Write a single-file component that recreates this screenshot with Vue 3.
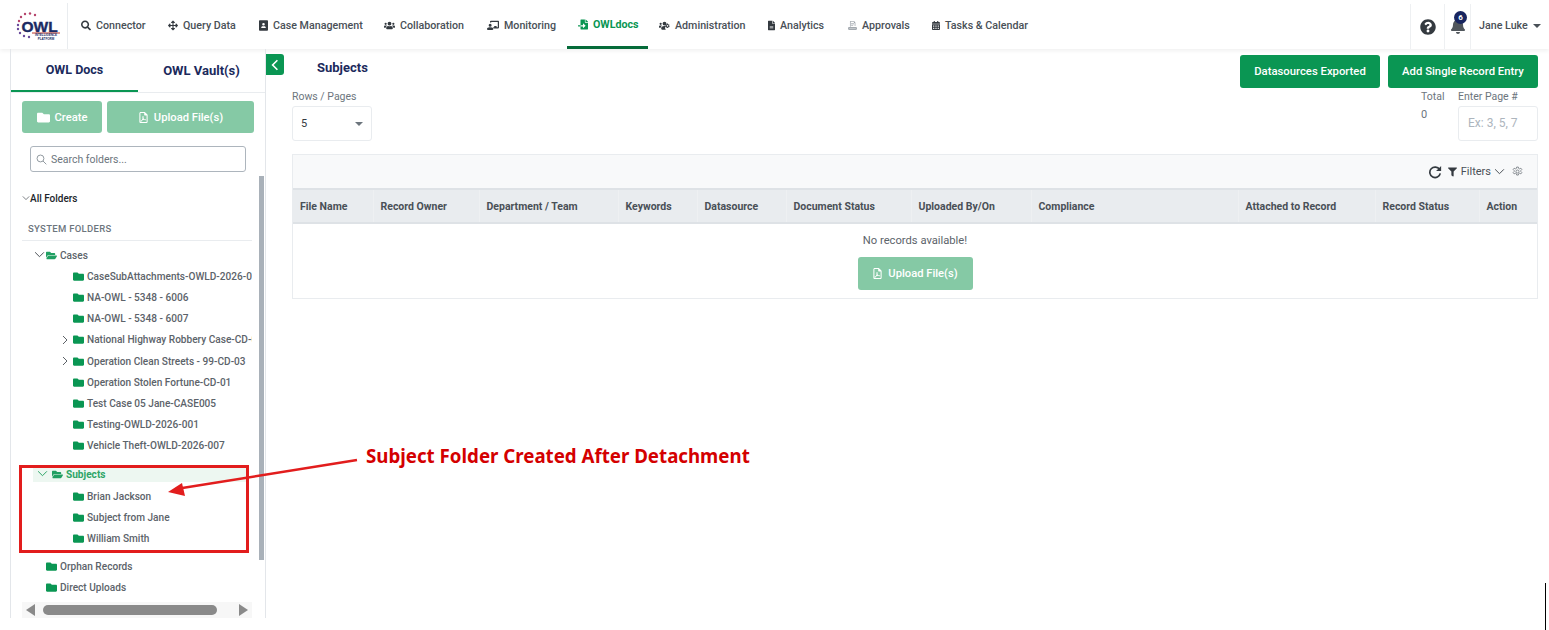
<script setup>
const icons = {
  search: ['0 0 512 512', 'M505 442.7L405.3 343c-4.5-4.5-10.6-7-17-7H372c27.6-35.3 44-79.7 44-128C416 93.1 322.9 0 208 0S0 93.1 0 208s93.1 208 208 208c48.3 0 92.7-16.4 128-44v16.3c0 6.4 2.5 12.5 7 17l99.7 99.7c9.4 9.4 24.6 9.4 33.9 0l28.3-28.3c9.4-9.4 9.4-24.6.1-34zM208 336c-70.7 0-128-57.2-128-128 0-70.7 57.2-128 128-128 70.7 0 128 57.2 128 128 0 70.7-57.2 128-128 128z'],
  move: ['0 0 512 512', 'M352.201 425.775l-79.196 79.196c-9.373 9.373-24.568 9.373-33.941 0l-79.196-79.196c-15.119-15.119-4.411-40.971 16.971-40.97h51.162L228 284H127.196v51.162c0 21.382-25.851 32.09-40.971 16.971L7.029 272.937c-9.373-9.373-9.373-24.569 0-33.941L86.225 159.8c15.119-15.119 40.971-4.411 40.971 16.971V228H228V127.196h-51.23c-21.382 0-32.09-25.851-16.971-40.971l79.196-79.196c9.373-9.373 24.568-9.373 33.941 0l79.196 79.196c15.119 15.119 4.411 40.971-16.971 40.971h-51.162V228h100.804v-51.162c0-21.382 25.851-32.09 40.97-16.971l79.196 79.196c9.373 9.373 9.373 24.569 0 33.941L425.773 352.2c-15.119 15.119-40.971 4.411-40.97-16.971V284H284v100.804h51.23c21.382 0 32.09 25.851 16.971 40.971z'],
  book: ['0 0 448 512', 'M48 0h352c26 0 48 22 48 48v416c0 26-22 48-48 48H48c-26 0-48-22-48-48V48C0 22 22 0 48 0zm176 128a64 64 0 1 0 0 128 64 64 0 0 0 0-128zM112 352v32h224v-32c0-35-29-64-64-64h-96c-35 0-64 29-64 64z'],
  users: ['0 0 640 512', 'M96 224a64 64 0 1 0 0-128 64 64 0 0 0 0 128zm448 0a64 64 0 1 0 0-128 64 64 0 0 0 0 128zm32 32h-64c-18 0-33 7-45 19 40 22 69 62 75 109h66c18 0 32-14 32-32v-32c0-35-29-64-64-64zm-256 0a112 112 0 1 0 0-224 112 112 0 0 0 0 224zm77 32h-8c-21 10-44 16-69 16s-48-6-69-16h-8c-64 0-115 52-115 115v29c0 26 22 48 48 48h288c26 0 48-22 48-48v-29c0-63-51-115-115-115zM173 275c-12-12-27-19-45-19H64c-35 0-64 29-64 64v32c0 18 14 32 32 32h66c6-47 35-87 75-109z'],
  monitor: ['0 0 640 512', 'M208 352c-3 0-6 0-9 1-10 3-21 5-31 5s-21-2-31-5c-3-1-6-1-9-1-62 0-128 39-128 96 0 27 22 48 48 48h240c26 0 48-21 48-48 0-57-66-96-128-96zm-40-32a80 80 0 1 0 0-160 80 80 0 0 0 0 160zM592 0H208c-26 0-48 22-48 49v47c23 0 45 7 64 18V64h352v288h-64v-64H384v64h-76c19 17 33 39 38 64h246c26 0 48-22 48-49V49c0-27-22-49-48-49z'],
  fileIn: ['0 0 512 512', 'M16 288c-9 0-16 7-16 16v32c0 9 7 16 16 16h112v-64zm489-183L407 7c-5-5-11-7-17-7h-6v128h128v-6c0-6-2-12-7-17zm-153 31V0H152c-13 0-24 11-24 24v264h128v-65c0-14 17-21 27-11l96 97c6 6 6 16 0 22l-96 97c-10 10-27 3-27-11v-65H128v136c0 13 11 24 24 24h336c13 0 24-11 24-24V160H376c-13 0-24-11-24-24z'],
  cogs: ['0 0 640 512', 'M610 305l-23-13c2-12 2-24 0-36l23-13c3-2 4-5 3-8-6-19-16-36-29-50-2-2-5-3-8-1l-23 13c-9-8-20-14-31-18v-27c0-3-2-6-5-6-19-4-39-4-58 0-3 0-5 3-5 6v27c-11 4-22 10-31 18l-23-13c-3-2-6-1-8 1-13 14-23 31-29 50-1 3 0 6 3 8l23 13c-2 12-2 24 0 36l-23 13c-3 2-4 5-3 8 6 19 16 36 29 50 2 2 5 3 8 1l23-13c9 8 20 14 31 18v27c0 3 2 6 5 6 19 4 39 4 58 0 3 0 5-3 5-6v-27c11-4 22-10 31-18l23 13c3 2 6 1 8-1 13-14 23-31 29-50 1-3 0-6-3-8zM496 322a48 48 0 1 1 0-96 48 48 0 0 1 0 96zM96 224a64 64 0 1 0 0-128 64 64 0 0 0 0 128zm224 32a112 112 0 1 0 0-224 112 112 0 0 0 0 224zm-147 19c-12-12-27-19-45-19H64c-35 0-64 29-64 64v32c0 18 14 32 32 32h66c6-47 35-87 75-109zm147 13c-25 0-48 6-69 16h-8c-64 0-115 52-115 115v29c0 26 22 48 48 48h224c-32-26-48-88-48-130 0-28 4-55 10-78z'],
  file: ['0 0 384 512', 'M224 136V0H24C11 0 0 11 0 24v464c0 13 11 24 24 24h336c13 0 24-11 24-24V160H248c-13 0-24-11-24-24zm160-14v6H256V0h6c6 0 12 3 17 7l98 98c4 5 7 11 7 17zM96 300h192v30H96zm0 70h192v30H96z'],
  calendar: ['0 0 448 512', 'M0 464c0 26.5 21.5 48 48 48h352c26.5 0 48-21.5 48-48V192H0v272zm320-196c0-6.6 5.4-12 12-12h40c6.6 0 12 5.4 12 12v40c0 6.6-5.4 12-12 12h-40c-6.6 0-12-5.4-12-12v-40zm0 128c0-6.6 5.4-12 12-12h40c6.6 0 12 5.4 12 12v40c0 6.6-5.4 12-12 12h-40c-6.6 0-12-5.4-12-12v-40zM192 268c0-6.6 5.4-12 12-12h40c6.6 0 12 5.4 12 12v40c0 6.6-5.4 12-12 12h-40c-6.6 0-12-5.4-12-12v-40zm0 128c0-6.6 5.4-12 12-12h40c6.6 0 12 5.4 12 12v40c0 6.6-5.4 12-12 12h-40c-6.6 0-12-5.4-12-12v-40zM64 268c0-6.6 5.4-12 12-12h40c6.6 0 12 5.4 12 12v40c0 6.6-5.4 12-12 12H76c-6.6 0-12-5.4-12-12v-40zm0 128c0-6.6 5.4-12 12-12h40c6.6 0 12 5.4 12 12v40c0 6.6-5.4 12-12 12H76c-6.6 0-12-5.4-12-12v-40zM400 64h-48V16c0-8.8-7.2-16-16-16h-32c-8.8 0-16 7.2-16 16v48H160V16c0-8.8-7.2-16-16-16h-32c-8.8 0-16 7.2-16 16v48H48C21.5 64 0 85.5 0 112v48h448v-48c0-26.5-21.5-48-48-48z'],
  approvals: ['0 0 512 512', 'M112 16h240l64 64v200h-32V96h-48V48H144v272h-32zM176 120h170v26H176zm0 60h170v26H176zm0 60h120v26H176zM40 352h432c14 0 24 10 24 24v96c0 14-10 24-24 24H40c-14 0-24-10-24-24v-96c0-14 10-24 24-24zm24 50v26h384v-26z'],
  folder: ['0 0 512 512', 'M464 128H272l-64-64H48C21.49 64 0 85.49 0 112v288c0 26.51 21.49 48 48 48h416c26.51 0 48-21.49 48-48V176c0-26.51-21.49-48-48-48z'],
  folderOpen: ['0 0 576 512', 'M572.694 292.093L500.27 416.248A63.997 63.997 0 0 1 444.989 448H45.025c-18.523 0-30.064-20.093-20.731-36.093l72.424-124.155A64 64 0 0 1 152 256h399.964c18.523 0 30.064 20.093 20.73 36.093zM152 224h328v-48c0-26.51-21.49-48-48-48H272l-64-64H48C21.49 64 0 85.49 0 112v278.046l69.077-118.418C86.214 242.25 117.989 224 152 224z'],
  pdf: ['0 0 384 512', 'M320 464c9 0 16-7 16-16V160h-80c-18 0-32-14-32-32V48H64c-9 0-16 7-16 16v384c0 9 7 16 16 16zM0 64C0 29 29 0 64 0h165c17 0 33 7 45 19l91 91c12 12 19 28 19 45v293c0 35-29 64-64 64H64c-35 0-64-29-64-64zm180 130c14 0 24 12 22 26-3 22-9 44-17 64 12 20 27 38 44 54 24-4 66-6 76 14 9 20-10 40-32 36-20-3-38-14-54-26-28 6-55 15-81 27-14 28-32 60-58 60-20 0-32-22-22-38 12-20 36-34 58-44 14-26 26-54 36-82-8-20-14-42-16-64 0-14 10-27 24-27z'],
  question: ['0 0 512 512', 'M504 256c0 136.997-111.043 248-248 248S8 392.997 8 256C8 119.083 119.043 8 256 8s248 111.083 248 248zM262.655 90c-54.497 0-89.255 22.957-116.549 63.758-3.536 5.286-2.353 12.415 2.715 16.258l34.699 26.31c5.205 3.947 12.621 3.008 16.665-2.122 17.864-22.658 30.113-35.797 57.303-35.797 20.429 0 45.698 13.148 45.698 32.958 0 14.976-12.363 22.667-32.534 33.976C247.128 238.528 216 254.941 216 296v4c0 6.627 5.373 12 12 12h56c6.627 0 12-5.373 12-12v-1.333c0-28.462 83.186-29.647 83.186-106.667 0-58.002-60.165-102-116.531-102zM256 338c-25.365 0-46 20.635-46 46 0 25.364 20.635 46 46 46s46-20.636 46-46c0-25.365-20.635-46-46-46z'],
  bell: ['0 0 448 512', 'M224 512c35.32 0 63.97-28.65 63.97-64H160.03c0 35.35 28.65 64 63.97 64zm215.39-149.71c-19.32-20.76-55.47-51.99-55.47-154.29 0-77.7-54.48-139.9-127.94-155.16V32c0-17.67-14.32-32-31.98-32s-31.98 14.33-31.98 32v20.84C118.56 68.1 64.08 130.3 64.08 208c0 102.3-36.15 133.53-55.47 154.29-6 6.45-8.66 14.16-8.61 21.71.11 16.4 12.98 32 32.1 32h383.8c19.12 0 32-15.6 32.1-32 .05-7.55-2.61-15.27-8.61-21.71z'],
  filter: ['0 0 512 512', 'M487.976 0H24.028C2.71 0-8.047 25.866 7.058 40.971L192 225.941V432c0 7.831 3.821 15.341 10.237 19.059l80 56C298.02 518.19 320 507.491 320 488V225.941l184.947-184.97C520.021 25.896 509.338 0 487.976 0z'],
}

const nav = [
  { label: 'Connector', icon: 'search', width: 87 },
  { label: 'Query Data', icon: 'move', width: 91 },
  { label: 'Case Management', icon: 'book', width: 125 },
  { label: 'Collaboration', icon: 'users', width: 103 },
  { label: 'Monitoring', icon: 'monitor', width: 91 },
  { label: 'OWLdocs', icon: 'fileIn', width: 81, active: true },
  { label: 'Administration', icon: 'cogs', width: 109 },
  { label: 'Analytics', icon: 'file', width: 80 },
  { label: 'Approvals', icon: 'approvals', width: 84 },
  { label: 'Tasks & Calendar', icon: 'calendar', width: 120 },
]

const caseFolders = [
  { name: 'CaseSubAttachments-OWLD-2026-007' },
  { name: 'NA-OWL - 5348 - 6006' },
  { name: 'NA-OWL - 5348 - 6007' },
  { name: 'National Highway Robbery Case-CD-004', more: true },
  { name: 'Operation Clean Streets - 99-CD-03', more: true },
  { name: 'Operation Stolen Fortune-CD-01' },
  { name: 'Test Case 05 Jane-CASE005' },
  { name: 'Testing-OWLD-2026-001' },
  { name: 'Vehicle Theft-OWLD-2026-007' },
]
const subjectFolders = ['Brian Jackson', 'Subject from Jane', 'William Smith']

const columns = [
  { label: 'File Name', width: 80 },
  { label: 'Record Owner', width: 106 },
  { label: 'Department / Team', width: 139 },
  { label: 'Keywords', width: 79 },
  { label: 'Datasource', width: 89 },
  { label: 'Document Status', width: 125 },
  { label: 'Uploaded By/On', width: 120 },
  { label: 'Compliance', width: 207 },
  { label: 'Attached to Record', width: 137 },
  { label: 'Record Status', width: 104 },
  { label: 'Action', width: 58 },
]
</script>

<template>
  <div class="page">
    <header class="topbar">
      <div class="logo">
        <svg width="46" height="28" viewBox="0 0 46 28">
          <g fill="#b5436b">
            <circle cx="5" cy="5" r="1.200" /><circle cx="9" cy="2" r="1.200" /><circle cx="14" cy="1.500" r="1.200" />
            <circle cx="19" cy="3" r="1.200" /><circle cx="3" cy="9" r="1.200" />
          </g>
          <g fill="#6a4a9c">
            <circle cx="2" cy="13" r="1.200" /><circle cx="2" cy="17" r="1.200" /><circle cx="4" cy="21" r="1.200" />
            <circle cx="8" cy="24" r="1.200" /><circle cx="13" cy="25" r="1.200" />
          </g>
          <text x="5.500" y="20" class="logo-word">OWL</text>
          <rect x="16" y="20.500" width="28" height="1" fill="#c0392b" />
          <text x="30" y="24.300" class="logo-sub">INTELLIGENCE</text>
          <text x="30" y="27.500" class="logo-sub">PLATFORM</text>
        </svg>
      </div>
      <nav class="nav">
        <a
          v-for="item in nav"
          :key="item.label"
          class="nav-item"
          :class="{ active: item.active }"
          :style="{ width: item.width + 'px' }"
        >
          <svg class="nav-icon" :class="'ico-' + item.icon" :viewBox="icons[item.icon][0]"><path :d="icons[item.icon][1]" /></svg>
          {{ item.label }}
        </a>
      </nav>
      <div class="top-right">
        <div class="top-cell help">
          <svg class="help-icon" :viewBox="icons.question[0]"><path :d="icons.question[1]" /></svg>
        </div>
        <div class="top-cell bell">
          <svg class="bell-icon" :viewBox="icons.bell[0]"><path :d="icons.bell[1]" /></svg>
          <span class="badge">6</span>
        </div>
        <div class="user">Jane Luke <i class="caret"></i></div>
      </div>
    </header>

    <div class="body">
      <aside class="sidebar">
        <div class="tabs">
          <div class="tab active">OWL Docs</div>
          <div class="tab vault">OWL Vault(s)</div>
        </div>
        <div class="side-actions">
          <button class="btn-soft create">
            <svg class="btn-icon" :viewBox="icons.folder[0]"><path :d="icons.folder[1]" /></svg>
            Create
          </button>
          <button class="btn-soft upload">
            <svg class="btn-icon" :viewBox="icons.pdf[0]"><path :d="icons.pdf[1]" /></svg>
            Upload File(s)
          </button>
        </div>
        <div class="search">
          <svg class="search-icon" viewBox="0 0 16 16" fill="none" stroke="#7c858d" stroke-width="1.200">
            <circle cx="6.500" cy="6.500" r="5" /><path d="M10.200 10.200L15 15" />
          </svg>
          <span>Search folders...</span>
        </div>
        <div class="all-folders">
          <svg class="chev" viewBox="0 0 10 10"><path d="M1 3l4 4 4-4" /></svg>
          All Folders
        </div>
        <div class="tree">
          <div class="section-label">SYSTEM FOLDERS</div>
          <div class="row level-1 first">
            <svg class="chev tree-chev" viewBox="0 0 10 10"><path d="M1 3l4 4 4-4" /></svg>
            <svg class="folder open" :viewBox="icons.folderOpen[0]"><path :d="icons.folderOpen[1]" /></svg>
            <span>Cases</span>
          </div>
          <div v-for="f in caseFolders" :key="f.name" class="row level-2">
            <svg v-if="f.more" class="chev more" viewBox="0 0 10 10"><path d="M3 1l4 4-4 4" /></svg>
            <svg class="folder" :viewBox="icons.folder[0]"><path :d="icons.folder[1]" /></svg>
            <span>{{ f.name }}</span>
          </div>
          <div class="row subjects">
            <svg class="chev tree-chev" viewBox="0 0 10 10"><path d="M1 3l4 4 4-4" /></svg>
            <svg class="folder open" :viewBox="icons.folderOpen[0]"><path :d="icons.folderOpen[1]" /></svg>
            <span>Subjects</span>
          </div>
          <div v-for="name in subjectFolders" :key="name" class="row level-2">
            <svg class="folder" :viewBox="icons.folder[0]"><path :d="icons.folder[1]" /></svg>
            <span>{{ name }}</span>
          </div>
          <div class="row level-1 orphan">
            <svg class="folder" :viewBox="icons.folder[0]"><path :d="icons.folder[1]" /></svg>
            <span>Orphan Records</span>
          </div>
          <div class="row level-1">
            <svg class="folder" :viewBox="icons.folder[0]"><path :d="icons.folder[1]" /></svg>
            <span>Direct Uploads</span>
          </div>
        </div>
        <div class="hscroll">
          <i class="arrow-left"></i>
          <div class="hscroll-track"><div class="hscroll-thumb"></div></div>
          <i class="arrow-right"></i>
        </div>
        <div class="vscroll"></div>
      </aside>

      <main class="main">
        <button class="collapse">
          <svg viewBox="0 0 10 14" width="8" height="12" fill="none" stroke="#fff" stroke-width="2"><path d="M8 1L2 7l6 6" /></svg>
        </button>
        <div class="title-row">
          <h1 class="title">Subjects</h1>
          <div class="title-actions">
            <button class="btn-solid exported">Datasources Exported</button>
            <button class="btn-solid single">Add Single Record Entry</button>
          </div>
        </div>
        <div class="controls">
          <div class="field">
            <label>Rows / Pages</label>
            <div class="select">5 <i class="select-caret"></i></div>
          </div>
          <div class="total">
            <label>Total</label>
            <span>0</span>
          </div>
          <div class="field">
            <label>Enter Page #</label>
            <div class="page-input">Ex: 3, 5, 7</div>
          </div>
        </div>
        <section class="table-card">
          <div class="toolbar">
            <svg class="refresh" viewBox="0 0 16 16" fill="none" stroke="#343a40" stroke-width="1.900">
              <path d="M13.200 5.200A6 6 0 1 0 14 9.500" /><path d="M15 1v5.800H9.200" fill="#343a40" stroke="none" />
            </svg>
            <svg class="filter" :viewBox="icons.filter[0]"><path :d="icons.filter[1]" /></svg>
            <span class="filters">Filters</span>
            <svg class="chev filters-chev" viewBox="0 0 10 10"><path d="M1 3l4 4 4-4" /></svg>
            <svg class="gear" viewBox="0 0 16 16" fill="none" stroke="#5c636a" stroke-width="1">
              <path d="M6.800 1.500h2.400l.4 2 1.500.7 1.800-1 1.400 1.900-1.400 1.400v1.600l1.400 1.400-1.400 2-1.800-1-1.500.7-.4 2H6.800l-.4-2-1.500-.7-1.800 1-1.400-2 1.400-1.400V6.500L1.700 5.100l1.400-1.900 1.800 1 1.500-.7z" />
              <circle cx="8" cy="8" r="2.200" />
            </svg>
          </div>
          <table class="grid">
            <colgroup>
              <col v-for="c in columns" :key="c.label" :style="{ width: c.width + 'px' }" />
            </colgroup>
            <thead>
              <tr><th v-for="c in columns" :key="c.label">{{ c.label }}</th></tr>
            </thead>
          </table>
          <div class="empty">
            <p>No records available!</p>
            <button class="btn-soft table-upload">
              <svg class="btn-icon" :viewBox="icons.pdf[0]"><path :d="icons.pdf[1]" /></svg>
              Upload File(s)
            </button>
          </div>
        </section>
      </main>
    </div>

    <!-- callout drawn over the screenshot -->
    <div class="callout-box"></div>
    <svg class="callout-arrow" width="200" height="44" viewBox="0 0 200 44">
      <path d="M197 2L16 31" stroke="#e21d1d" stroke-width="2.500" fill="none" />
      <path d="M8 34l14-9 3 13z" fill="#e21d1d" />
    </svg>
    <div class="callout-text">Subject Folder Created After Detachment</div>
    <div class="edge-line"></div>
  </div>
</template>

<style>
html, body { margin: 0; background: #fff; overflow: hidden; }
</style>

<style scoped>
.page {
  position: relative;
  width: 1549px;
  height: 630px;
  overflow: hidden;
  background: #fff;
  font-family: Roboto, "Noto Sans", sans-serif;
  color: #343a40;
}
.topbar {
  display: flex;
  align-items: stretch;
  height: 49px;
  box-shadow: 0 2px 4px rgba(0, 0, 0, 0.06);
}
.logo {
  display: flex;
  align-items: center;
  justify-content: center;
  width: 68px;
  box-sizing: border-box;
  margin-top: 3px;
  padding-left: 10px;
  border-right: 1px solid #e9ecef;
}
.logo-word { font: 800 15.500px "Liberation Sans", sans-serif; fill: #1b2a63; stroke: #1b2a63; stroke-width: 0.400; }
.logo-sub { font: 700 3px "Liberation Sans", sans-serif; fill: #1b2a63; text-anchor: middle; }
.nav { display: flex; flex: 1; padding-left: 1.500px; }
.nav-item {
  display: flex;
  align-items: center;
  gap: 5px;
  flex: none;
  box-sizing: border-box;
  padding: 2px 0 0 11.500px;
  font-size: 10.700px;
  font-weight: 500;
  color: #495057;
  white-space: nowrap;
}
.nav-item.active {
  color: #0a9653;
  font-weight: 700;
  border-bottom: 3px solid #056b3a;
}
.nav-icon { width: 10px; height: 11px; fill: #343a40; flex: none; }
.ico-book { width: 9px; }
.ico-users, .ico-cogs { width: 11px; }
.ico-monitor { width: 12px; }
.ico-approvals { width: 9px; fill: #868e96; }
.ico-file { width: 7px; }
.ico-calendar { width: 8px; }
.nav-item.active .nav-icon { fill: #0a9653; }
.top-right { display: flex; }
.top-cell {
  position: relative;
  display: flex;
  align-items: center;
  justify-content: center;
  box-sizing: border-box;
  margin-top: 4px;
  border-left: 1px solid #eef0f2;
}
.help { width: 34px; }
.help-icon { width: 16px; height: 16px; fill: #343a40; }
.bell { width: 27px; border-right: 1px solid #eef0f2; }
.bell-icon { width: 14px; height: 18px; fill: #50565c; margin-top: -1px; }
.badge {
  position: absolute;
  top: 7px;
  left: 9px;
  width: 13px;
  height: 13px;
  border-radius: 50%;
  background: #18255f;
  color: #fff;
  font-size: 8px;
  font-weight: 700;
  line-height: 13px;
  text-align: center;
}
.user {
  display: flex;
  align-items: center;
  gap: 5px;
  box-sizing: border-box;
  width: 78px;
  padding: 2px 0 0 8px;
  font-size: 10.700px;
  font-weight: 500;
  color: #495057;
  white-space: nowrap;
}
.caret {
  border: 4px solid transparent;
  border-top-color: #495057;
  border-bottom: 0;
}
.body { display: flex; height: 569px; }
.sidebar {
  position: relative;
  flex: none;
  box-sizing: border-box;
  width: 256px;
  margin-left: 10px;
  border-left: 1px solid #e3e6ea;
  border-right: 1px solid #e3e6ea;
}
.tabs { display: flex; height: 43px; border-bottom: 1px solid #e9ecef; }
.tab {
  display: flex;
  align-items: center;
  justify-content: center;
  width: 127px;
  box-sizing: border-box;
  font-size: 12.500px;
  font-weight: 700;
  color: #1b2a5c;
}
.tab.active { border-bottom: 2px solid #0a9653; height: 43px; }
.tab.vault { font-size: 13px; }
.side-actions { display: flex; gap: 5px; padding: 8px 0 0 11px; }
.btn-soft {
  display: flex;
  align-items: center;
  justify-content: center;
  gap: 5px;
  height: 33px;
  padding: 0;
  border: 0;
  border-radius: 3px;
  background: #85c9a5;
  color: #fff;
  font: 500 11.200px Roboto, sans-serif;
}
.create { width: 80px; height: 32px; }
.upload { width: 147px; height: 32px; }
.btn-icon { height: 11px; width: 11px; fill: #fff; }
.create .btn-icon { width: 13px; height: 13px; }
.search {
  display: flex;
  align-items: center;
  gap: 4px;
  box-sizing: border-box;
  width: 216px;
  height: 26px;
  margin: 13px 0 0 19px;
  padding-left: 5px;
  border: 1px solid #adb5bd;
  border-radius: 3px;
  font-size: 10.500px;
  color: #6c757d;
}
.search-icon { width: 11px; height: 11px; }
.all-folders {
  display: flex;
  align-items: center;
  height: 16px;
  margin: 18px 0 0 11px;
  font-size: 10px;
  font-weight: 500;
  color: #212529;
}
.chev { width: 8px; height: 8px; fill: none; stroke: #4a5056; stroke-width: 0.900; flex: none; }
.tree {
  width: 230px;
  margin: 14px 0 0 11px;
  overflow: hidden;
}
.section-label {
  height: 20px;
  padding-left: 6px;
  border-bottom: 1px solid #e9ecef;
  font-size: 9.500px;
  line-height: 18px;
  font-weight: 500;
  letter-spacing: 0.300px;
  color: #6c757d;
}
.row {
  position: relative;
  display: flex;
  align-items: center;
  gap: 3px;
  height: 21.100px;
  font-size: 10.100px;
  font-weight: 500;
  color: #5c636a;
  white-space: nowrap;
}
.first { margin-top: 4px; }
.level-1 { padding-left: 24px; }
.level-2 { padding-left: 51px; }
.folder { width: 11px; height: 11px; fill: #0a9653; flex: none; }
.folder.open { opacity: 0.9; }
.tree-chev { position: absolute; left: 12px; top: 4px; width: 11px; height: 11px; }
.more { position: absolute; left: 38px; top: 6px; width: 10px; height: 10px; }
.subjects {
  height: 15px;
  margin: 11px 5px 4px 11px;
  padding-left: 19px;
  background: #edf7f1;
  color: #2da567;
  font-weight: 700;
}
.subjects .tree-chev { left: 4px; top: 1px; stroke: #2da567; }
.orphan { margin-top: 6.700px; }
.hscroll {
  display: flex;
  align-items: center;
  width: 230px;
  height: 16px;
  margin: 3.500px 0 0 11px;
  background: #f7f7f7;
}
.hscroll-track { flex: 1; padding: 0 6px 0 8px; }
.hscroll-thumb { width: 174px; height: 10px; border-radius: 5px; background: #8a8a8a; }
.arrow-left, .arrow-right { width: 0; height: 0; border: 6px solid transparent; }
.arrow-left { border-left: 0; border-right: 9px solid #8a8a8a; margin-left: 4px; }
.arrow-right { border-right: 0; border-left: 9px solid #8a8a8a; margin-right: 4px; }
.vscroll {
  position: absolute;
  top: 127px;
  right: 1px;
  width: 5px;
  height: 384px;
  background: #a9b1b9;
}
.main {
  position: relative;
  flex: 1;
  box-sizing: border-box;
  padding: 6px 12px 0 26px;
}
.collapse {
  position: absolute;
  left: 0;
  top: 5px;
  display: flex;
  align-items: center;
  justify-content: center;
  width: 18px;
  height: 21px;
  padding: 0;
  border: 0;
  border-radius: 0 3px 3px 0;
  background: #0a9653;
}
.title-row { display: flex; justify-content: space-between; height: 34px; }
.title {
  margin: 5px 0 0 25px;
  font-size: 13px;
  font-weight: 700;
  color: #1b2a5c;
}
.title-actions { display: flex; gap: 8px; }
.btn-solid {
  height: 33px;
  padding: 0;
  border: 0;
  border-radius: 3px;
  background: #0a9653;
  color: #fff;
  font: 500 11.300px Roboto, sans-serif;
}
.exported { width: 140px; }
.single { width: 150px; }
.controls { display: flex; align-items: flex-start; box-sizing: border-box; height: 65px; padding-top: 1px; }
.field { display: flex; flex-direction: column; }
.field label, .total label {
  height: 16px;
  font-size: 10.500px;
  line-height: 14px;
  color: #6c757d;
}
.field:first-child { margin-right: auto; }
.select, .page-input {
  box-sizing: border-box;
  width: 80px;
  height: 35px;
  border: 1px solid #e9ecef;
  border-radius: 3px;
}
.select {
  display: flex;
  align-items: center;
  justify-content: space-between;
  padding: 0 8px;
  font-size: 11px;
  color: #343a40;
}
.select-caret { border: 4px solid transparent; border-top-color: #6c757d; border-bottom: 0; }
.page-input { padding: 9px 0 0 9px; font-size: 12px; color: #adb5bd; }
.total {
  display: flex;
  flex-direction: column;
  width: 37px;
  font-size: 11px;
  color: #6c757d;
}
.total span { margin-top: 2px; }
.table-card { border: 1px solid #e9ecef; }
.toolbar {
  display: flex;
  align-items: center;
  justify-content: flex-end;
  height: 33px;
  padding-right: 14px;
  background: #f8f9fa;
}
.refresh { width: 14px; height: 14px; margin-right: 6px; }
.filter { width: 9px; height: 10px; fill: #343a40; margin-right: 4px; }
.filters { font-size: 11px; color: #495057; }
.filters-chev { width: 11px; height: 11px; margin: 0 7px 0 3px; }
.gear { width: 11px; height: 11px; }
.grid {
  width: 1243px;
  table-layout: fixed;
  border-collapse: collapse;
  background: #e9ecef;
}
.grid th {
  height: 34px;
  padding: 0 0 0 7px;
  border-top: 2px solid #dee2e6;
  border-bottom: 2px solid #dee2e6;
  border-left: 1px solid #eef0f2;
  box-sizing: border-box;
  font-size: 10.500px;
  font-weight: 700;
  color: #495057;
  text-align: left;
  white-space: nowrap;
  overflow: hidden;
}
.grid th:first-child { border-left: 0; }
.empty {
  display: flex;
  flex-direction: column;
  align-items: center;
  height: 74px;
}
.empty p { margin: 9px 0 0; font-size: 11.200px; line-height: 15px; color: #5c636a; }
.table-upload { width: 115px; margin-top: 9px; }
.callout-box {
  position: absolute;
  left: 19px;
  top: 465px;
  width: 224px;
  height: 82px;
  border: 3px solid #e21d1d;
}
.callout-arrow { position: absolute; left: 160px; top: 458px; }
.callout-text {
  position: absolute;
  left: 366px;
  top: 444px;
  font-family: "Noto Sans", sans-serif;
  font-size: 18.700px;
  font-weight: 700;
  line-height: 24px;
  color: #d40000;
  white-space: nowrap;
}
.edge-line {
  position: absolute;
  left: 1545px;
  top: 583px;
  width: 1px;
  height: 47px;
  background: #000;
}
</style>
